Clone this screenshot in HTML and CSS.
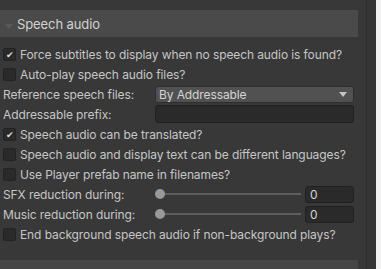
FILE: index.html
```html
<!DOCTYPE html>
<html lang="en">
<head>
  <meta charset="UTF-8" />
  <title>Speech audio</title>
  <link rel="stylesheet" href="styles.css">
</head>
<body>

  <div class="window">
    <div class="inspector">
      <div class="foldout-head">
        <span class="fold-arrow"></span>
        <span>Speech audio</span>
      </div>

      <div class="fields">
        <div class="row"><span class="check on">✔</span><span>Force subtitles to display when no speech audio is found?</span></div>
        <div class="row"><span class="check"></span><span>Auto-play speech audio files?</span></div>
        <div class="row">
          <span class="label">Reference speech files:</span>
          <div class="dropdown"><span>By Addressable</span><span class="drop-arrow"></span></div>
        </div>
        <div class="row">
          <span class="label">Addressable prefix:</span>
          <div class="textfield"></div>
        </div>
        <div class="row"><span class="check on">✔</span><span>Speech audio can be translated?</span></div>
        <div class="row"><span class="check"></span><span>Speech audio and display text can be different languages?</span></div>
        <div class="row"><span class="check"></span><span>Use Player prefab name in filenames?</span></div>
        <div class="row">
          <span class="label">SFX reduction during:</span>
          <div class="slider"><span class="thumb"></span><span class="track"></span></div>
          <div class="numfield">0</div>
        </div>
        <div class="row">
          <span class="label">Music reduction during:</span>
          <div class="slider"><span class="thumb"></span><span class="track"></span></div>
          <div class="numfield">0</div>
        </div>
        <div class="row"><span class="check"></span><span>End background speech audio if non-background plays?</span></div>
      </div>

      <div class="foldout-head next"></div>
    </div>
    <div class="gutter"></div>
    <div class="gutter-right"></div>
    <div class="edge"></div>
  </div>

</body>
</html>
```

FILE: styles.css
```css
html, body {
  margin: 0;
  padding: 0;
  height: 100%;
  background: #383838;
  font-family: Inter, "Noto Sans", sans-serif;
  font-size: 12px;
  letter-spacing: -0.1px;
  color: #c6c6c6;
  overflow: hidden;
}

.window {
  display: flex;
  height: 269px;
}

.inspector {
  width: 358px;
  display: flex;
  flex-direction: column;
}

.foldout-head {
  margin-top: 10px;
  height: 27px;
  background: #4a4a4a;
  display: flex;
  align-items: center;
  gap: 4px;
  padding-left: 5px;
  font-size: 13px;
  color: #d2d2d2;
}

.fold-arrow {
  width: 0;
  height: 0;
  margin-top: 6px;
  border-left: 4px solid transparent;
  border-right: 4px solid transparent;
  border-top: 5px solid #5a5a5a;
}

.foldout-head.next {
  margin-top: 16px;
  flex: 1;
  background: #464646;
}

.fields {
  padding-top: 7px;
  display: flex;
  flex-direction: column;
}

.row {
  height: 20px;
  display: flex;
  align-items: center;
  padding-left: 3px;
  white-space: nowrap;
}

.check {
  width: 13px;
  height: 13px;
  margin-right: 4px;
  background: #2a2a2a;
  border: 1px solid #232323;
  border-radius: 2px;
  box-sizing: border-box;
  font-size: 9px;
  line-height: 12px;
  text-align: center;
  color: #dcdcdc;
}

.label {
  width: 152px;
}

.dropdown {
  width: 199px;
  height: 17px;
  box-sizing: border-box;
  background: #515151;
  border: 1px solid #2e2e2e;
  border-radius: 3px;
  display: flex;
  align-items: center;
  justify-content: space-between;
  padding: 0 6px 0 3px;
  color: #d4d4d4;
}

.drop-arrow {
  width: 0;
  height: 0;
  border-left: 4px solid transparent;
  border-right: 4px solid transparent;
  border-top: 5px solid #c4c4c4;
}

.textfield {
  width: 199px;
  height: 18px;
  box-sizing: border-box;
  background: #2a2a2a;
  border: 1px solid #212121;
  border-radius: 3px;
}

.slider {
  width: 146px;
  display: flex;
  align-items: center;
}

.thumb {
  width: 10px;
  height: 10px;
  border-radius: 50%;
  background: #999999;
}

.track {
  flex: 1;
  height: 2px;
  background: #5e5e5e;
}

.numfield {
  margin-left: 4px;
  width: 49px;
  height: 17px;
  box-sizing: border-box;
  background: #2a2a2a;
  border: 1px solid #212121;
  border-radius: 3px;
  padding-left: 4px;
  line-height: 15px;
  color: #d4d4d4;
}

.gutter {
  width: 8px;
  border-right: 1px solid #2e2e2e;
}

.gutter-right {
  width: 9px;
  background: #353535;
}

.edge {
  flex: 1;
  background: #f2f2f2;
}
```
